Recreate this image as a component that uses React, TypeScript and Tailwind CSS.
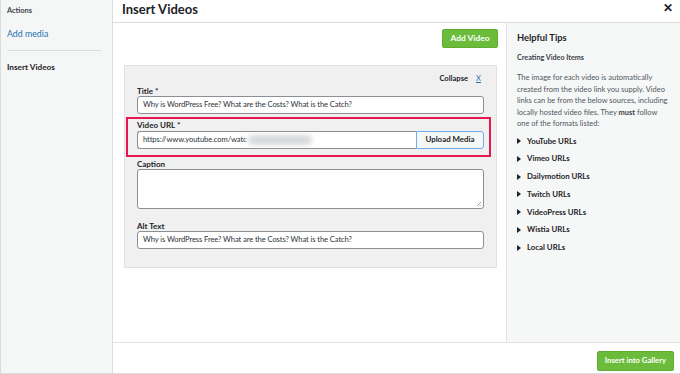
import React from 'react';

const font = { fontFamily: 'Lato, "Open Sans", sans-serif' };

const sources = [
  'YouTube URLs',
  'Vimeo URLs',
  'Dailymotion URLs',
  'Twitch URLs',
  'VideoPress URLs',
  'Wistia URLs',
  'Local URLs',
];

function Label({ children }: { children: React.ReactNode }) {
  return <div className="h-[10px] text-[8px] font-bold text-[#1d2327] leading-[10px]">{children}</div>;
}

function TextInput({ value }: { value: string }) {
  return (
    <div className="h-[18px] bg-white border border-[#8c8f94] rounded-[3px] px-[5px] flex items-center text-[7.6px] tracking-[-0.1px] text-[#2c3338] whitespace-nowrap overflow-hidden">
      {value}
    </div>
  );
}

export default function App() {
  return (
    <div className="w-[680px] h-[374px] bg-white overflow-hidden" style={font}>
      <div className="flex h-[374px] border-l border-b border-[#dcdcde]">
        {/* sidebar */}
        <aside className="w-[112px] shrink-0 bg-[#f5f6f6] border-r border-[#dcdcde] px-[6px] pt-[5px]">
          <div className="text-[7.4px] font-bold text-[#3c434a] leading-[12px]">Actions</div>
          <div className="mt-[11px] text-[8.8px] text-[#2271b1] leading-[12px]">Add media</div>
          <div className="mt-[10px] h-px bg-[#dcdcde] mr-[5px]" />
          <div className="mt-[10px] text-[8.2px] font-bold text-[#1d2327] leading-[12px]">Insert Videos</div>
        </aside>

        <div className="flex-1 flex flex-col min-w-0">
          {/* header */}
          <header className="h-[23px] shrink-0 border-b border-[#dcdcde] flex items-start justify-between pl-[9px] pr-[7px]">
            <h1 className="text-[13px] font-bold text-[#1d2327] leading-[18px]">Insert Videos</h1>
            <span className="text-[12px] font-bold text-[#1d2327] leading-[16px]">✕</span>
          </header>

          <div className="flex flex-1 min-h-0">
            {/* main content */}
            <main className="flex-1 pl-[11px] pr-[8px] pt-[6px]">
              <div className="flex justify-end">
                <button className="w-[56px] h-[19px] bg-[#6abc3a] border border-[#5fae30] rounded-[2px] text-white text-[8.4px] font-bold">
                  Add Video
                </button>
              </div>

              <section className="mt-[17px] mr-[1px] h-[203px] bg-[#f0f0f1] border border-[#e2e2e4] px-[12px] pt-[7px]">
                <div className="flex justify-end items-center gap-[8px] pr-[3px] text-[7.6px] leading-[11px]">
                  <span className="font-bold text-[#1d2327]">Collapse</span>
                  <span className="text-[#2271b1] underline">X</span>
                </div>

                <div className="mt-[2px]">
                  <Label>Title *</Label>
                  <TextInput value="Why is WordPress Free? What are the Costs? What is the Catch?" />
                </div>

                <div className="mt-[3px] -ml-[11px] -mr-[7px] border-2 border-[#e5194f] pl-[9px] pr-[5px] pt-[1px] pb-[6px]">
                  <Label>Video URL *</Label>
                  <div className="mt-[1px] flex h-[18px]">
                    <div className="flex-1 bg-white border border-[#8c8f94] border-r-0 rounded-l-[3px] px-[5px] flex items-center text-[7.6px] tracking-[-0.1px] text-[#2c3338] whitespace-nowrap overflow-hidden">
                      https://www.youtube.com/watc
                      <span className="ml-[1px] inline-block w-[64px] h-[10px] rounded-full bg-[#d6d8da] blur-[2.5px]" />
                    </div>
                    <button className="w-[68px] bg-[#f6f7f7] border border-[#72aee6] rounded-r-[3px] text-[7.9px] font-bold text-[#1d2327]">
                      Upload Media
                    </button>
                  </div>
                </div>

                <div className="mt-[2px]">
                  <Label>Caption</Label>
                  <div className="relative h-[40px] bg-white border border-[#8c8f94] rounded-[3px]">
                    <svg className="absolute right-[1px] bottom-[1px]" width="6" height="6" viewBox="0 0 6 6">
                      <path d="M1 5 L5 1 M3.5 5 L5 3.5" stroke="#8c8f94" strokeWidth="0.8" />
                    </svg>
                  </div>
                </div>

                <div className="mt-[12px]">
                  <Label>Alt Text</Label>
                  <TextInput value="Why is WordPress Free? What are the Costs? What is the Catch?" />
                </div>
              </section>
            </main>

            {/* helpful tips */}
            <aside className="w-[174px] shrink-0 bg-[#f6f7f7] border-l border-[#e2e2e4] pl-[10px] pr-[7px] pt-[8px]">
              <h2 className="text-[9.3px] font-bold text-[#1d2327] leading-[14px]">Helpful Tips</h2>
              <div className="mt-[7px] text-[7.2px] font-bold text-[#3c434a] leading-[11px]">Creating Video Items</div>
              <p className="mt-[9px] text-[7.5px] text-[#50575e] leading-[11.5px] whitespace-nowrap">
                The image for each video is automatically
                <br />
                created from the video link you supply. Video
                <br />
                links can be from the below sources, including
                <br />
                locally hosted video files. They <b className="text-[#3c434a]">must</b> follow
                <br />
                one of the formats listed:
              </p>
              <ul className="mt-[6px] flex flex-col gap-[6.8px]">
                {sources.map((s) => (
                  <li key={s} className="h-[11px] flex items-center gap-[6px] text-[7.8px] font-bold text-[#1d2327] leading-[11px]">
                    <svg width="4" height="6" viewBox="0 0 4 6">
                      <path d="M0 0 L4 3 L0 6 Z" fill="#1d2327" />
                    </svg>
                    {s}
                  </li>
                ))}
              </ul>
            </aside>
          </div>

          {/* footer */}
          <footer className="h-[31px] shrink-0 border-t border-[#e2e2e4] flex items-start justify-end pt-[8px] pr-[6px]">
            <button className="w-[77px] h-[20px] bg-[#6abc3a] border border-[#5fae30] rounded-[2px] text-white text-[7.7px] font-bold">
              Insert into Gallery
            </button>
          </footer>
        </div>
      </div>
    </div>
  );
}
